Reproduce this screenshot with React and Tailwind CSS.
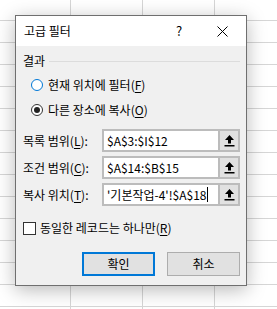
import React from 'react';

const font = { fontFamily: '"Noto Sans CJK KR", "Noto Sans", sans-serif' };

function U({ children }) {
    return <span className="underline underline-offset-2">{children}</span>;
}

function UpIcon() {
    return (
        <svg width="11" height="13" viewBox="0 0 11 13">
            <path d="M5.5 1 L10 6 L7 6 L7 9.5 L4 9.5 L4 6 L1 6 Z" fill="#000" />
            <rect x="0.5" y="11" width="10" height="1.5" fill="#000" />
        </svg>
    );
}

function RangeRow({ label, value, cursor }) {
    return (
        <div className="flex items-center h-[23px]">
            <div className="w-[79px] text-[12px] leading-none text-black">{label}</div>
            <div className="flex h-[23px] w-[138px] border-2 border-[#bcbcbc] bg-white">
                <div className="flex-1 flex items-center pl-[3px] text-[12px] text-black overflow-hidden whitespace-nowrap">
                    {value}
                    {cursor && <span className="inline-block w-px h-[15px] bg-black ml-px" />}
                </div>
                <div className="w-[20px] flex items-center justify-center bg-[#e1e1e1] border-l-2 border-[#bcbcbc]">
                    <UpIcon />
                </div>
            </div>
        </div>
    );
}

export default function App() {
    return (
        <div
            className="relative w-[277px] h-[309px] overflow-hidden bg-white bg-[linear-gradient(to_right,#d6d6d6_1px,transparent_1px),linear-gradient(to_bottom,#d6d6d6_1px,transparent_1px)] bg-[size:72px_22px] bg-[position:70px_20px]"
            style={font}
        >
            <div className="absolute left-[15px] top-[15px] w-[232px] h-[271px] border border-[#6f6f6f] bg-[#f0f0f0] shadow-[0_4px_18px_rgba(0,0,0,0.28)] flex flex-col">
                <div className="h-[30px] bg-white flex items-center pl-[8px] text-[12px] text-black">
                    <span className="flex-1">고급 필터</span>
                    <span className="w-[20px] text-center mr-[28px] text-[13px]">?</span>
                    <svg width="11" height="11" viewBox="0 0 11 11" className="mr-[18px]">
                        <path d="M0.5 0.5 L10.5 10.5 M10.5 0.5 L0.5 10.5" stroke="#000" strokeWidth="1" />
                    </svg>
                </div>

                <div className="flex-1 flex flex-col pl-[7px] pr-[5px] pt-[7px]">
                    <div className="flex items-center h-[16px] text-[12px] text-black">
                        <span>결과</span>
                        <div className="flex-1 h-px bg-[#dcdcdc] ml-[4px] mr-[1px]" />
                    </div>

                    <div className="flex items-center h-[20px] mt-[6px] ml-[8px] text-[12px] text-black">
                        <span className="w-[12px] h-[12px] rounded-full border border-[#0078d7] bg-white" />
                        <span className="ml-[5px]">현재 위치에 필터(<U>F</U>)</span>
                    </div>
                    <div className="flex items-center h-[20px] mt-[5px] ml-[8px] text-[12px] text-black">
                        <span className="w-[12px] h-[12px] rounded-full border border-[#333] bg-white flex items-center justify-center">
                            <span className="w-[6px] h-[6px] rounded-full bg-[#222]" />
                        </span>
                        <span className="ml-[5px]">다른 장소에 복사(<U>O</U>)</span>
                    </div>

                    <div className="flex flex-col gap-[4px] mt-[9px]">
                        <RangeRow label={<>목록 범위(<U>L</U>):</>} value="$A$3:$I$12" />
                        <RangeRow label={<>조건 범위(<U>C</U>):</>} value="$A$14:$B$15" />
                        <RangeRow label={<>복사 위치(<U>T</U>):</>} value="'기본작업-4'!$A$18" cursor />
                    </div>

                    <div className="flex items-center h-[20px] mt-[12px] text-[12px] text-black">
                        <span className="w-[13px] h-[13px] border border-[#333] bg-white" />
                        <span className="ml-[4px]">동일한 레코드는 하나만(<U>R</U>)</span>
                    </div>

                    <div className="flex justify-end gap-[12px] mt-[14px] mr-[1px]">
                        <button className="w-[73px] h-[24px] border-2 border-[#0078d7] bg-[#e1e1e1] text-[12px] text-black">
                            확인
                        </button>
                        <button className="w-[73px] h-[24px] border border-[#adadad] bg-[#e1e1e1] text-[12px] text-black">
                            취소
                        </button>
                    </div>
                </div>
            </div>
        </div>
    );
}
